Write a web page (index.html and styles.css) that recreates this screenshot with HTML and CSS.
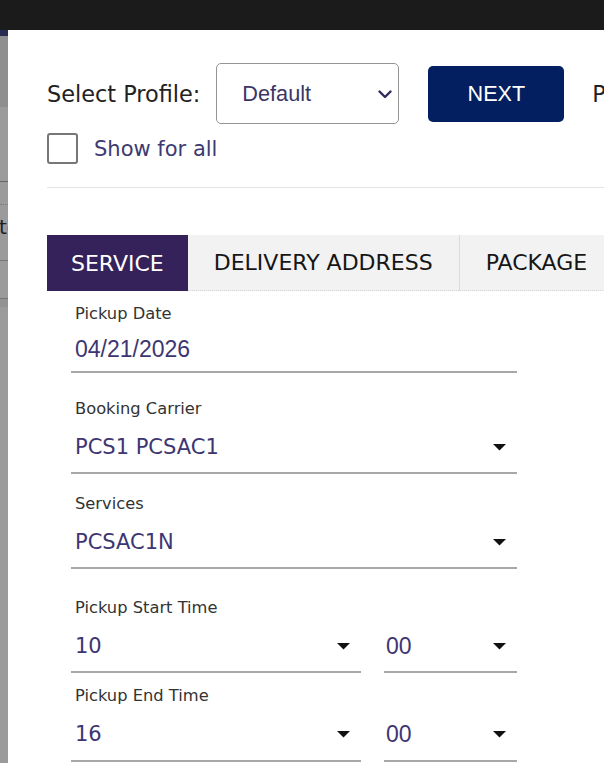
FILE: index.html
```html
<!DOCTYPE html>
<html lang="en">
<head>
<meta charset="utf-8">
<title>Create Pickup</title>
<link rel="stylesheet" href="styles.css">
</head>
<body>
<div class="topbar"></div>
<div class="stage">
  <aside class="backdrop">
    <div class="bd-nav"></div>
    <div class="bd-head"></div>
    <div class="bd-row bd-row-a"></div>
    <div class="bd-row bd-row-b"></div>
    <div class="bd-text"><span>te</span></div>
    <div class="bd-row bd-row-c"></div>
    <div class="bd-row bd-row-d"></div>
    <div class="bd-rest"></div>
  </aside>
  <section class="modal">
    <div class="profile-row">
      <span class="profile-label">Select Profile:</span>
      <div class="select">
        <span>Default</span>
        <svg class="chev" width="14" height="9" viewBox="0 0 14 9"><path d="M1.5 1.5 L7 7 L12.5 1.5" fill="none" stroke="#2f2a5a" stroke-width="2.4" stroke-linecap="round" stroke-linejoin="round"/></svg>
      </div>
      <button class="btn-next">NEXT</button>
      <span class="profile-more">Print</span>
    </div>
    <div class="check-row">
      <span class="checkbox"></span>
      <span class="check-text">Show for all</span>
    </div>
    <div class="divider"></div>
    <nav class="tabs">
      <div class="tab tab-active">SERVICE</div>
      <div class="tab">DELIVERY ADDRESS</div>
      <div class="tab">PACKAGE</div>
    </nav>
    <div class="form">
      <div class="field field-date">
        <div class="field-label">Pickup Date</div>
        <div class="field-value value-arial">04/21/2026</div>
      </div>
      <div class="field field-carrier">
        <div class="field-label">Booking Carrier</div>
        <div class="field-value"><span>PCS1 PCSAC1</span><svg class="caret" width="13" height="7" viewBox="0 0 13 7"><path d="M0 0 H13 L6.5 6.5 Z" fill="#111"/></svg></div>
      </div>
      <div class="field field-services">
        <div class="field-label">Services</div>
        <div class="field-value"><span>PCSAC1N</span><svg class="caret" width="13" height="7" viewBox="0 0 13 7"><path d="M0 0 H13 L6.5 6.5 Z" fill="#111"/></svg></div>
      </div>
      <div class="field field-start">
        <div class="field-label">Pickup Start Time</div>
        <div class="time-row">
          <div class="field-value hours"><span>10</span><svg class="caret" width="13" height="7" viewBox="0 0 13 7"><path d="M0 0 H13 L6.5 6.5 Z" fill="#111"/></svg></div>
          <div class="field-value minutes value-arial"><span>00</span><svg class="caret" width="13" height="7" viewBox="0 0 13 7"><path d="M0 0 H13 L6.5 6.5 Z" fill="#111"/></svg></div>
        </div>
      </div>
      <div class="field field-end">
        <div class="field-label">Pickup End Time</div>
        <div class="time-row">
          <div class="field-value hours"><span>16</span><svg class="caret" width="13" height="7" viewBox="0 0 13 7"><path d="M0 0 H13 L6.5 6.5 Z" fill="#111"/></svg></div>
          <div class="field-value minutes value-arial"><span>00</span><svg class="caret" width="13" height="7" viewBox="0 0 13 7"><path d="M0 0 H13 L6.5 6.5 Z" fill="#111"/></svg></div>
        </div>
      </div>
    </div>
  </section>
</div>
</body>
</html>
```
FILE: styles.css
```css
html, body {
  margin: 0;
  padding: 0;
}
body {
  width: 604px;
  height: 763px;
  overflow: hidden;
  background: #fff;
  font-family: "DejaVu Sans", "Noto Sans", sans-serif;
}
.topbar {
  height: 30px;
  background: #1b1b1b;
}
.stage {
  display: flex;
  height: 733px;
}
.backdrop {
  flex: none;
  width: 8px;
  display: flex;
  flex-direction: column;
  background: #9b9b9b;
  overflow: hidden;
}
.bd-nav {
  height: 6px;
  background: #2a2b55;
}
.bd-head {
  height: 71px;
  background: #8f8f8f;
}
.bd-row {
  flex: none;
}
.bd-row-a {
  margin-top: 74px;
  height: 0;
  border-top: 1px solid #666;
}
.bd-row-b {
  margin-top: 22px;
  height: 0;
  border-top: 1px dotted #7c7c7c;
}
.bd-text {
  margin-top: 11px;
  height: 22px;
  line-height: 22px;
  font-size: 20px;
  color: #1e1e1e;
  white-space: nowrap;
}
.bd-text span {
  display: block;
  margin-left: -1px;
}
.bd-row-c {
  margin-top: 22px;
  height: 0;
  border-top: 1px solid #777;
}
.bd-row-d {
  margin-top: 37px;
  height: 8px;
  border-top: 1px solid #777;
  background: #939393;
}
.bd-rest {
  flex: 1;
}

.modal {
  flex: none;
  width: 760px;
  padding: 33px 0 0 39px;
  box-sizing: border-box;
  background: #fff;
}

.profile-row {
  display: flex;
  align-items: center;
  height: 61px;
  white-space: nowrap;
}
.profile-label {
  font-size: 22.4px;
  color: #222;
  margin-right: 16px;
}
.select {
  flex: none;
  box-sizing: border-box;
  width: 183px;
  height: 61px;
  border: 1px solid #949494;
  border-radius: 5px;
  display: flex;
  align-items: center;
  justify-content: space-between;
  padding: 0 6px 0 25px;
  font-family: "Liberation Sans", Arial, sans-serif;
  font-size: 21.7px;
  color: #3b3566;
  margin-right: 29px;
}
.chev {
  display: block;
  margin-top: 2px;
}
.btn-next {
  flex: none;
  width: 136px;
  height: 56px;
  border: 0;
  border-radius: 5px;
  background: #031f5f;
  color: #fff;
  font-family: "Liberation Sans", Arial, sans-serif;
  font-size: 21.6px;
  padding: 0;
  margin-right: 28px;
}
.profile-more {
  font-size: 22.4px;
  color: #222;
}

.check-row {
  display: flex;
  align-items: center;
  margin-top: 9px;
  height: 31px;
}
.checkbox {
  flex: none;
  width: 31px;
  height: 31px;
  box-sizing: border-box;
  border: 2px solid #777;
  border-radius: 3px;
  margin-right: 16px;
}
.check-text {
  font-size: 21px;
  color: #3d3a70;
}

.divider {
  margin-top: 23px;
  height: 1px;
  background: #e4e4e4;
}

.tabs {
  display: flex;
  margin-top: 47px;
  height: 56px;
  white-space: nowrap;
}
.tab {
  box-sizing: border-box;
  height: 56px;
  padding: 0 26px;
  display: flex;
  align-items: center;
  font-size: 22px;
  color: #161616;
  background: #f2f2f2;
  border-bottom: 1px dotted #d4d4d4;
}
.tab + .tab {
  border-left: 1px solid #dcdcdc;
}
.tab-active {
  background: #35225b;
  color: #fff;
  padding: 0 24px;
  border-bottom: 0;
}
.tab-active + .tab {
  border-left: 0;
}

.form {
  width: 446px;
  margin-left: 24px;
  padding-top: 13px;
}
.field-label {
  font-size: 16.3px;
  line-height: 20px;
  color: #333;
  padding-left: 4px;
}
.field-value {
  box-sizing: content-box;
  margin-top: 13px;
  height: 30px;
  line-height: 30px;
  padding: 0 11px 9px 4px;
  border-bottom: 2px solid #a8a8a8;
  display: flex;
  align-items: center;
  justify-content: space-between;
  font-size: 21px;
  color: #3d3672;
  white-space: nowrap;
}
.value-arial {
  font-family: "Liberation Sans", Arial, sans-serif;
  font-size: 23px;
}
.caret {
  display: block;
  flex: none;
}
.field-date .field-value {
  margin-top: 10px;
  padding-bottom: 7px;
}
.field-carrier {
  margin-top: 26px;
}
.field-carrier .field-value {
  padding-bottom: 10px;
}
.field-services {
  margin-top: 20px;
}
.field-services .field-value {
  padding-bottom: 10px;
}
.field-start {
  margin-top: 29px;
}
.field-start .field-value {
  padding-bottom: 10px;
}
.field-end {
  margin-top: 13px;
}
.field-end .field-value {
  padding-bottom: 11px;
}
.time-row {
  display: flex;
  gap: 23px;
}
.hours {
  width: 275px;
}
.minutes {
  width: 120px;
  padding-left: 2px;
}
```
